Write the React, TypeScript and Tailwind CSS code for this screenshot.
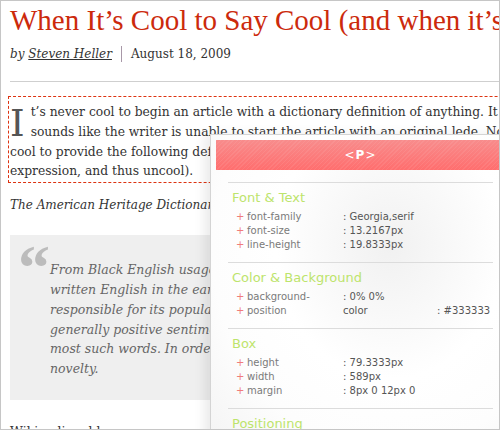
const serif = "font-['DejaVu_Serif','Liberation_Serif',serif]";

function Row({ label, value, extra }: { label: string; value: string; extra?: string }) {
  return (
    <div className="flex h-[14px] items-center whitespace-nowrap leading-[14px]">
      <span className="w-[11px] text-[#f07c7c]">+</span>
      <span className="w-[96px] text-[#7a7a7a]">{label}</span>
      <span className="w-[94px] text-[#555]">{value}</span>
      {extra && <span className="text-[#555]">{extra}</span>}
    </div>
  );
}

function Section({ title, children }: { title: string; children?: React.ReactNode }) {
  return (
    <div className="mx-[17px] border-t border-[#dcdcdc] pb-[10px] pt-[6px]">
      <div className="h-[18px] pl-[4px] text-[13px] leading-[18px] text-[#bde46c]">{title}</div>
      <div className="mt-[3px] pl-[8px] text-[10px]">{children}</div>
    </div>
  );
}

function Inspector() {
  return (
    <div className="absolute left-[209px] top-[133px] z-10 h-[320px] w-[300px] border-l border-t border-[#d4d4d4] bg-[radial-gradient(ellipse_at_60%_35%,#f1f1f1_0%,#ffffff_45%,#fdfdfd_70%,#f3f3f3_100%)] pt-[5px] font-['DejaVu_Sans',sans-serif] shadow-[-6px_0_10px_rgba(0,0,0,0.08)]">
      <div className="mx-[5px] flex h-[30px] items-center justify-center bg-[repeating-linear-gradient(135deg,rgba(255,255,255,0.07)_0px,rgba(255,255,255,0.07)_1px,transparent_1px,transparent_3px),linear-gradient(#f88c8c,#ff6e6e)] text-[12px] text-white">
        <span className="tracking-[1px]">&lt;<b>P</b>&gt;</span>
      </div>
      <div className="mt-[12px]">
        <Section title="Font & Text">
          <Row label="font-family" value=": Georgia,serif" />
          <Row label="font-size" value=": 13.2167px" />
          <Row label="line-height" value=": 19.8333px" />
        </Section>
        <Section title="Color & Background">
          <Row label="background-" value=": 0% 0%" />
          <Row label="position" value="color" extra=": #333333" />
        </Section>
        <Section title="Box">
          <Row label="height" value=": 79.3333px" />
          <Row label="width" value=": 589px" />
          <Row label="margin" value=": 8px 0 12px 0" />
        </Section>
        <Section title="Positioning" />
      </div>
    </div>
  );
}

export default function App() {
  return (
    <div className="relative h-[430px] w-[500px] overflow-hidden border border-[#c6c6c6] bg-white">
      <div className={`${serif} pl-[9px] text-[#333]`}>
        <h1 className="whitespace-nowrap pt-[2px] font-['Liberation_Serif',serif] text-[29px] leading-[34px] text-[#cc2a0c]">
          When It’s Cool to Say Cool (and when it’s not)
        </h1>
        <div className="mt-[7px] flex h-[20px] items-center whitespace-nowrap text-[12px]">
          <span className="italic">
            by <span className="underline">Steven Heller</span>
          </span>
          <span className="mx-[9px] h-[16px] w-px bg-[#a898a8]" />
          <span>August 18, 2009</span>
        </div>
        <div className="mt-[17px] h-px w-[600px] bg-[#cfcfcf]" />
        <div className="-ml-[2px] mt-[14px] w-[620px] border border-dashed border-[#dd3311] pl-[1px] pt-[6px] text-[12.3px] leading-[19.8px]">
          <div className="flex whitespace-nowrap">
            <span className="mr-[6px] mt-[3px] text-[37px] leading-[36px] text-[#555]">I</span>
            <div>
              <div>t’s never cool to begin an article with a dictionary definition of anything. It invariably</div>
              <div>sounds like the writer is unable to start the article with an original lede. Nonetheless, it is</div>
            </div>
          </div>
          <div className="whitespace-nowrap">cool to provide the following definition of the word (itself a once hip</div>
          <div className="whitespace-nowrap">expression, and thus uncool).</div>
        </div>
        <p className="mt-[12px] whitespace-nowrap text-[12px] italic leading-[20px]">
          The American Heritage Dictionary defines cool as:
        </p>
        <blockquote className="mt-[20px] flex h-[165px] w-[480px] bg-[#efefef] pl-[8px] pt-[4px] text-[12.5px] italic leading-[19.8px] text-[#666]">
          <span className="mr-[6px] h-[20px] w-[26px] font-['Liberation_Serif',serif] text-[64px] font-bold not-italic leading-[58px] text-[#bcbcbc]">“</span>
          <div className="mt-[21px] whitespace-nowrap">
            <div>From Black English usage of the 1930s, it crept into</div>
            <div>written English in the early 1950s; jazz musicians were</div>
            <div>responsible for its popularization. Cool has lasted</div>
            <div>generally positive sentiment, longer than</div>
            <div>most such words. In order to survive it kept its</div>
            <div>novelty.</div>
          </div>
        </blockquote>
        <p className="mt-[22px] whitespace-nowrap text-[12.5px] leading-[20px]">Wikipedia adds:</p>
      </div>
      <Inspector />
    </div>
  );
}
